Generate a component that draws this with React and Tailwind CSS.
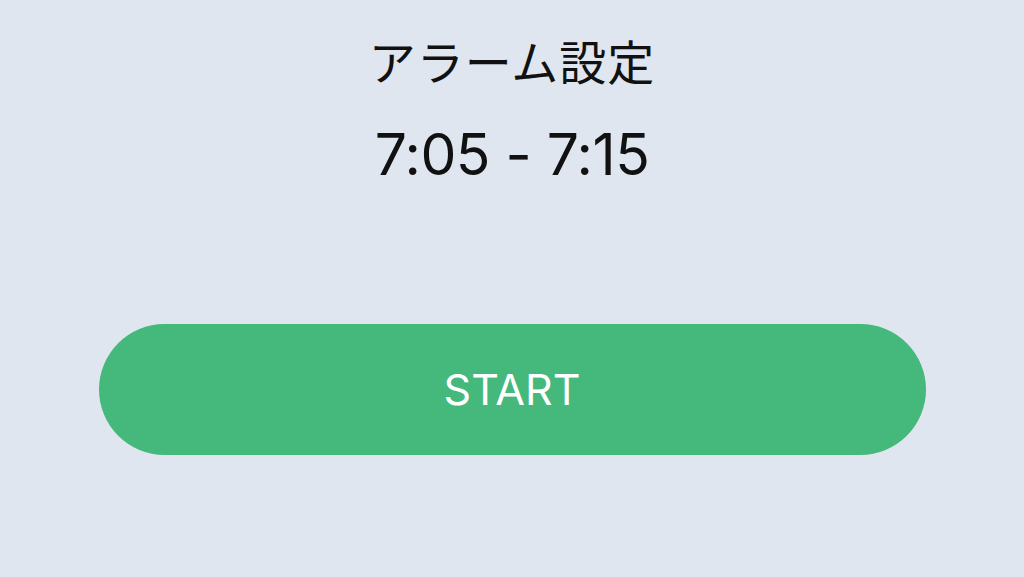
import React from 'react';

const App = () => {
  return (
    <div className="w-[1024px] h-[577px] bg-[#e0e6ef] flex flex-col items-center overflow-hidden" style={{ fontFamily: 'Inter, "Noto Sans CJK JP", sans-serif' }}>
      <h1 className="mt-[34px] h-[58px] leading-[58px] text-[47px] font-normal text-[#111111] tracking-[1px]">
        アラーム設定
      </h1>
      <p className="mt-[28px] h-[70px] leading-[70px] text-[57px] font-normal text-[#111111] tracking-[-0.5px]">
        7:05 - 7:15
      </p>
      <button className="mt-[134px] w-[827px] h-[131px] rounded-full bg-[#45b87b] text-white text-[43px] font-normal flex items-center justify-center">
        START
      </button>
    </div>
  );
};

export default App;
